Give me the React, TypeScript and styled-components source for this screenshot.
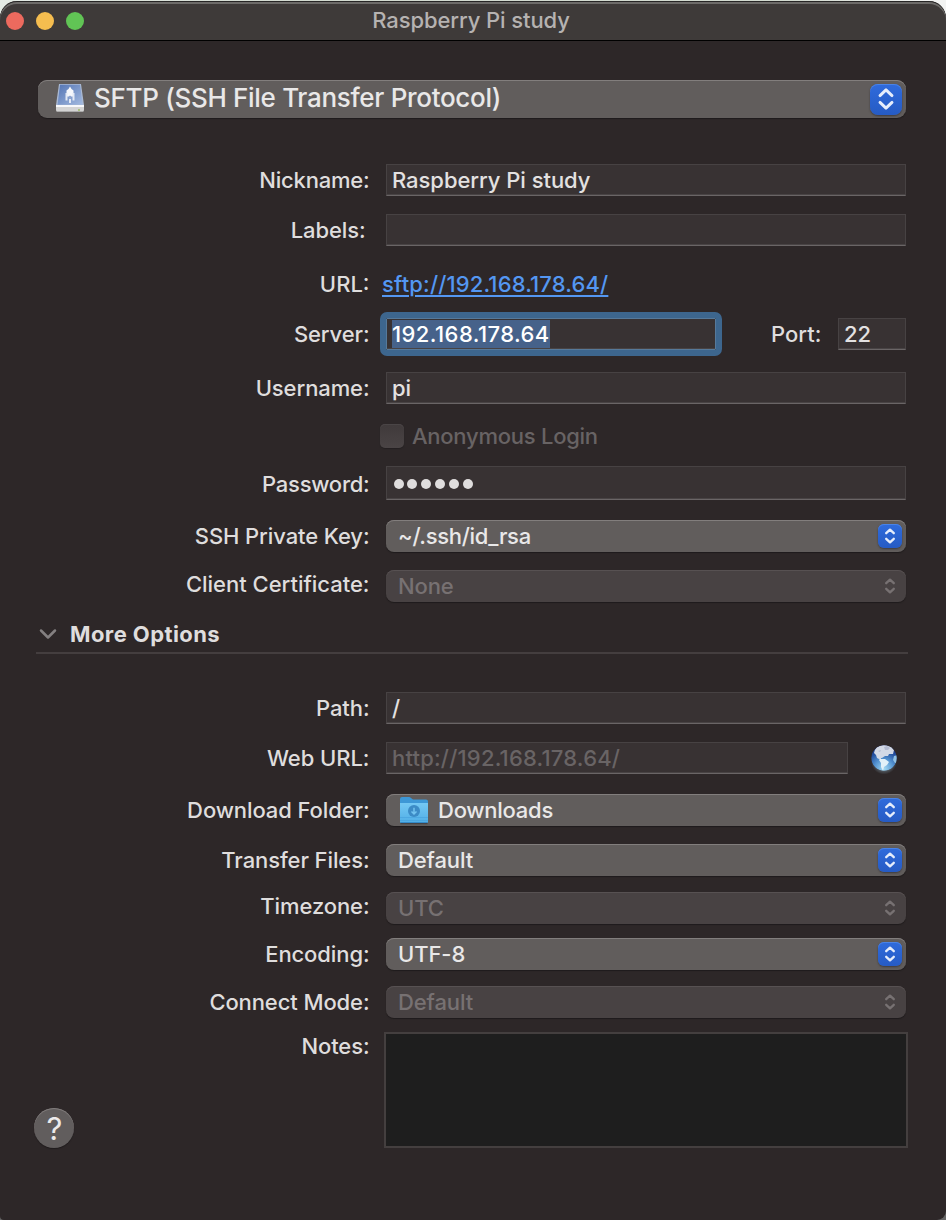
import React from "react";
import styled, { createGlobalStyle, css } from "styled-components";

const GlobalStyle = createGlobalStyle`
  * { box-sizing: border-box; }
  html, body { margin: 0; padding: 0; }
  body { background: linear-gradient(90deg, #e4ebe5 0, #d3dad0 300px, #d3dad0 800px, #f2f3f2 930px) top / 100% 30px no-repeat, #666; }
`;

const Window = styled.main`
  display: flex;
  flex-direction: column;
  width: 946px;
  height: 1219px;
  margin-top: 1px;
  overflow: hidden;
  border-radius: 17px 17px 9px 4px;
  background: #2d2728;
  color: #dfdddd;
  font-family: Inter, "Liberation Sans", sans-serif;
  font-size: 22px;
  font-weight: 450;
  line-height: 32px;
  white-space: nowrap;
`;

const TitleBar = styled.header`
  display: grid;
  grid-template-columns: 100px 1fr 100px;
  align-items: center;
  height: 40px;
  flex: none;
  background: #3e3a39;
  border-bottom: 1px solid #000;
  border-radius: 17px 17px 0 0;
  box-shadow: inset 0 1px 0 #262525, inset 0 3px 0 #6d6b69;
`;

const Lights = styled.div`
  display: flex;
  gap: 12px;
  padding: 1px 0 0 6px;
`;

const Light = styled.span<{ $color: string }>`
  width: 18px;
  height: 18px;
  border-radius: 50%;
  background: ${(p) => p.$color};
`;

const Title = styled.h1`
  margin: 0;
  padding: 0 4px 2px 0;
  text-align: center;
  font-size: 22px;
  font-weight: 450;
  line-height: 36px;
  letter-spacing: -0.09px;
  color: #b5b2b1;
`;

const Text = styled.span<{ $track?: number }>`
  letter-spacing: ${(p) => p.$track ?? 0}px;
`;

const Form = styled.section<{ $top: number }>`
  display: flex;
  flex-direction: column;
  margin-top: ${(p) => p.$top}px;
`;

const Row = styled.div<{ $gap?: number; $height?: number }>`
  display: grid;
  grid-template-columns: 370px 520px;
  grid-template-rows: 100%;
  column-gap: 16px;
  align-items: center;
  height: ${(p) => p.$height ?? 32}px;
  margin-top: ${(p) => p.$gap ?? 18}px;
`;

const Label = styled.label<{ $raise?: number; $drop?: number; $inset?: number; $track?: number }>`
  justify-self: end;
  padding-top: ${(p) => (p.$drop ?? 0) * 2}px;
  padding-bottom: ${(p) => (p.$raise ?? 0) * 2}px;
  padding-right: ${(p) => p.$inset ?? 0.5}px;
  letter-spacing: ${(p) => p.$track ?? -0.1}px;
`;

const Field = styled.div<{ $dim?: boolean; $width?: number }>`
  display: flex;
  align-items: center;
  height: 100%;
  width: ${(p) => (p.$width ? `${p.$width}px` : "100%")};
  padding-left: 5px;
  background: #383233;
  border: 1px solid #474243;
  border-bottom-color: #6a6566;
  box-shadow: inset 0 -1px 0 #484344;
  line-height: 30px;
  letter-spacing: -0.05px;
  color: ${(p) => (p.$dim ? "#696465" : "#e3e1e1")};
`;

const FocusedField = styled(Field)`
  padding-left: 5px;
  outline: 6px solid #3d668e;
  border-radius: 1px;
  border-color: #56799a;
`;

const Selection = styled.span`
  display: block;
  height: 28px;
  line-height: 28px;
  background: #46628a;
  color: #fff;
  font-weight: 500;
  letter-spacing: 0.44px;
`;

const Split = styled.div`
  display: flex;
  align-items: center;
  height: 100%;
`;

const PortLabel = styled.label`
  margin-left: 55px;
  width: 67px;
`;

const Link = styled.a`
  margin-left: -4px;
  justify-self: start;
  color: #5497f2;
  letter-spacing: 0.15px;
  text-decoration: underline;
  text-decoration-thickness: 2px;
  text-underline-offset: 3px;
  text-decoration-skip-ink: auto;
`;

const CheckRow = styled.div`
  display: flex;
  align-items: center;
  gap: 8px;
  grid-column: 2;
  margin-left: -6px;
  color: #686364;
`;

const Checkbox = styled.span`
  width: 24px;
  height: 24px;
  border-radius: 5px;
  background: linear-gradient(#403a3b, #4a4445);
  box-shadow: inset 0 1px 0 #4a4546, 0 1px 1px #242021;
`;

const Dots = styled.span`
  display: flex;
  gap: 3.9px;
  padding: 1px 0 0 1.6px;
`;

const Dot = styled.i`
  width: 10px;
  height: 10px;
  border-radius: 50%;
  background: #dfdddd;
`;

const Popup = styled.div<{ $off?: boolean; $large?: boolean }>`
  display: flex;
  align-items: center;
  height: 32px;
  padding: 0 4px 0 12px;
  border-radius: 8px;
  background: ${(p) => (p.$off ? "#484243" : "#615d5c")};
  color: ${(p) => (p.$off ? "#777172" : "#e9e8e8")};
  box-shadow: inset 0 1px 0 ${(p) => (p.$off ? "#575152" : "#827e7d")}, 0 1px 1px #1f1b1c;
  letter-spacing: -0.1px;
  ${(p) =>
    p.$large &&
    css`
      flex: none;
      width: 868px;
      height: 38px;
      margin: 39px 0 0 38px;
      padding-left: 16px;
      border-radius: 9px;
      font-size: 26px;
      line-height: 34px;
    `}
`;

const LargeText = styled(Text)`
  margin: 0 0 2px 8px;
`;

const Arrows = styled.span<{ $off?: boolean; $large?: boolean }>`
  display: grid;
  place-items: center;
  width: ${(p) => (p.$large ? 32 : 24)}px;
  height: ${(p) => (p.$large ? 31 : 24)}px;
  margin-left: auto;
  border-radius: ${(p) => (p.$large ? 8 : 6)}px;
  ${(p) =>
    !p.$off &&
    css`
      background: linear-gradient(#2f6bdc, #265bc4);
      box-shadow: inset 0 1px 0 #4a83e6, 0 1px 2px #3e3b3d;
    `}
`;

const FolderName = styled(Text)`
  margin-left: 8px;
`;

const MoreHeader = styled.div`
  display: flex;
  align-items: center;
  height: 38px;
  width: 872px;
  margin: 14px 0 0 36px;
  border-bottom: 2px solid #443e3f;
  font-weight: 700;
`;

const MoreText = styled.span`
  margin-left: 12px;
  letter-spacing: 0.42px;
`;

const NotesRow = styled.div`
  display: grid;
  grid-template-columns: 370px 524px;
  column-gap: 14px;
  margin-top: 14px;
`;

const NotesLabel = styled(Label)`
  margin-top: -2px;
`;

const Notes = styled.div`
  height: 116px;
  border: 2px solid #443f3f;
  background: #1e1e1e;
`;

const Help = styled.button`
  display: grid;
  place-items: center;
  width: 40px;
  height: 40px;
  margin: -40px 0 0 34px;
  padding: 1px 0 0 1px;
  border: 0;
  border-radius: 50%;
  background: #615d5d;
  box-shadow: inset 0 1px 0 #807c7c, 0 1px 1px #1f1b1c;
  color: #eceaea;
  font: 420 31px/40px Inter, sans-serif;
`;

function Stepper({ off, large }: { off?: boolean; large?: boolean }) {
  return (
    <Arrows $off={off} $large={large}>
      <svg
        width={large ? 18 : 12}
        height={large ? 24 : 18}
        viewBox={large ? "0 0 18 24" : "0 0 12 18"}
        fill="none"
        stroke={off ? "#777172" : "#e6edfb"}
        strokeWidth={large ? 2.9 : 2.3}
        strokeLinecap="round"
        strokeLinejoin="round"
      >
        {large ? (
          <path d="M3 8.6 9 2.9l6 5.7M3 15.4l6 5.7 6-5.7" />
        ) : (
          <path d="M2.2 6.2 6 2.6l3.8 3.6M2.2 11.8 6 15.4l3.8-3.6" />
        )}
      </svg>
    </Arrows>
  );
}

function DriveIcon() {
  return (
    <svg width="32" height="32" viewBox="0 0 32 32">
      <defs>
        <linearGradient id="drive" x1="0" x2="1" y2="1">
          <stop offset="0" stopColor="#5475b4" />
          <stop offset="1" stopColor="#a3bae0" />
        </linearGradient>
      </defs>
      <path d="M5 1h22l3 21H2z" fill="#aab9d3" />
      <path d="M6 1.8h20l2.5 20H3.5z" fill="url(#drive)" />
      <path d="M2 22h28v5q0 2-2 2H4q-2 0-2-2z" fill="#d3d3d3" />
      <path d="M2 22h28v2H2z" fill="#f7f8fa" />
      <path d="M3 28.5h26" stroke="#aaa" />
      <circle cx="25" cy="27" r="1" fill="#9ebc63" />
      <path d="M16 3.500q1 2.500 3.500 4v6h-7v-6Q15 6 16 3.500z" fill="#f5f7fb" />
      <path d="M12.500 10v7.500M19.500 10v7.500M16 12v8" fill="none" stroke="#e3e9f4" strokeWidth="2" />
      <path d="M15 13h2v3h-2z" fill="#8fa5cf" />
    </svg>
  );
}

function FolderIcon() {
  return (
    <svg width="32" height="32" viewBox="0 0 32 32">
      <defs>
        <linearGradient id="folder" x2="0" y2="1">
          <stop offset="0" stopColor="#75c8f4" />
          <stop offset="1" stopColor="#50aee6" />
        </linearGradient>
      </defs>
      <path d="M2.5 29.5h27" stroke="#454446" strokeWidth="1.5" />
      <path d="M2 5q0-2 2-2h7q1 0 2 1l2 1.5h13q2 0 2 2V12H2z" fill="#3d97d6" />
      <path d="M2 9h28v18.5q0 1.5-1.5 1.5h-25Q2 29 2 27.5z" fill="url(#folder)" />
      <path d="M2 23.5h28M2 26.5h28" stroke="#44a0dc" strokeWidth=".6" />
      <path d="M2.5 28.5h27" stroke="#348ac9" />
      <circle cx="16" cy="17" r="6" fill="#3c8bc6" />
      <path d="M16 13.8v6M13.5 17.5l2.5 2.5 2.5-2.5" fill="none" stroke="#73c3f0" strokeWidth="1.5" />
    </svg>
  );
}

function Globe({ className }: { className?: string }) {
  return (
    <svg className={className} width="30" height="32" viewBox="0 0 30 32">
      <defs>
        <radialGradient id="sea" cx=".5" cy=".92" r=".9">
          <stop offset="0" stopColor="#a5daf3" />
          <stop offset=".4" stopColor="#5796d2" />
          <stop offset=".75" stopColor="#234f9f" />
          <stop offset="1" stopColor="#192b78" />
        </radialGradient>
        <radialGradient id="glow">
          <stop offset=".7" stopColor="#6c7d8a" stopOpacity=".6" />
          <stop offset="1" stopColor="#6c7d8a" stopOpacity="0" />
        </radialGradient>
        <clipPath id="disc">
          <circle cx="15" cy="15" r="12.7" />
        </clipPath>
      </defs>
      <ellipse cx="15" cy="18.5" rx="13" ry="13" fill="url(#glow)" />
      <g clipPath="url(#disc)">
        <circle cx="15" cy="15" r="13" fill="url(#sea)" />
        <path d="M5 10q1-7 9-8 7-1 11 5l-1 4-4 0-1 2-3 0-3 2-1 0 0 2-4-2-1-3z" fill="#d3d9e6" />
        <path d="M15 4l3-1 3 2-2 2-3 0zM9 8l3-1-1 2z" fill="#b3bbd2" />
        <path d="M11 16l5 0 4 3-2 3-3 2-1 4-2-4 0-4-2-3z" fill="#e2f0f8" />
        <path d="M25 13l4-1v9l-3-1-2-3z" fill="#92c2e3" />
      </g>
    </svg>
  );
}

const GlobeIcon = styled(Globe)`
  margin: 1px 0 0 21px;
`;

export default function App() {
  return (
    <>
      <GlobalStyle />
      <Window>
        <TitleBar>
          <Lights>
            <Light $color="#ec6a5e" />
            <Light $color="#f5bd4f" />
            <Light $color="#61c455" />
          </Lights>
          <Title>Raspberry Pi study</Title>
        </TitleBar>

        <Popup $large>
          <DriveIcon />
          <LargeText $track={-0.31}>SFTP (SSH File Transfer Protocol)</LargeText>
          <Stepper large />
        </Popup>

        <Form $top={46}>
          <Row $gap={0}>
            <Label $track={-0.2}>Nickname:</Label>
            <Field>Raspberry Pi study</Field>
          </Row>
          <Row>
            <Label $inset={4.5}>Labels:</Label>
            <Field />
          </Row>
          <Row $gap={22}>
            <Label $track={0}>URL:</Label>
            <Link>sftp://192.168.178.64/</Link>
          </Row>
          <Row>
            <Label>Server:</Label>
            <Split>
              <FocusedField $width={330}>
                <Selection>192.168.178.64</Selection>
              </FocusedField>
              <PortLabel>Port:</PortLabel>
              <Field $width={68}>22</Field>
            </Split>
          </Row>
          <Row $gap={22}>
            <Label>Username:</Label>
            <Field>pi</Field>
          </Row>
          <Row $gap={16}>
            <CheckRow>
              <Checkbox />
              <Text $track={-0.25}>Anonymous Login</Text>
            </CheckRow>
          </Row>
          <Row $gap={14} $height={34}>
            <Label $track={-0.25} $drop={1}>Password:</Label>
            <Field>
              <Dots>
                <Dot /><Dot /><Dot /><Dot /><Dot /><Dot />
              </Dots>
            </Field>
          </Row>
          <Row $gap={20}>
            <Label>SSH Private Key:</Label>
            <Popup>
              <Text $track={-0.3}>~/.ssh/id_rsa</Text>
              <Stepper />
            </Popup>
          </Row>
          <Row>
            <Label $raise={2} $track={-0.02}>Client Certificate:</Label>
            <Popup $off>
              None
              <Stepper off />
            </Popup>
          </Row>
        </Form>

        <MoreHeader>
          <svg width="22" height="18" viewBox="0 0 22 18" fill="none" stroke="#848081" strokeWidth="2.5" strokeLinecap="round" strokeLinejoin="round">
            <path d="M5 5.5l7 7 7-7" />
          </svg>
          <MoreText>More Options</MoreText>
        </MoreHeader>

        <Form $top={38}>
          <Row $gap={0}>
            <Label $track={-0.1}>Path:</Label>
            <Field>/</Field>
          </Row>
          <Row>
            <Label $track={-0.05}>Web URL:</Label>
            <Split>
              <Field $dim $width={462}>
                <Text $track={0.2}>http://192.168.178.64/</Text>
              </Field>
              <GlobeIcon />
            </Split>
          </Row>
          <Row $gap={20}>
            <Label>Download Folder:</Label>
            <Popup>
              <FolderIcon />
              <FolderName $track={-0.25}>Downloads</FolderName>
              <Stepper />
            </Popup>
          </Row>
          <Row>
            <Label>Transfer Files:</Label>
            <Popup>
              Default
              <Stepper />
            </Popup>
          </Row>
          <Row $gap={16}>
            <Label $raise={2}>Timezone:</Label>
            <Popup $off>
              UTC
              <Stepper off />
            </Popup>
          </Row>
          <Row $gap={14}>
            <Label>Encoding:</Label>
            <Popup>
              UTF-8
              <Stepper />
            </Popup>
          </Row>
          <Row $gap={16}>
            <Label>Connect Mode:</Label>
            <Popup $off>
              Default
              <Stepper off />
            </Popup>
          </Row>
        </Form>

        <NotesRow>
          <NotesLabel>Notes:</NotesLabel>
          <Notes />
        </NotesRow>
        <Help>?</Help>
      </Window>
    </>
  );
}
